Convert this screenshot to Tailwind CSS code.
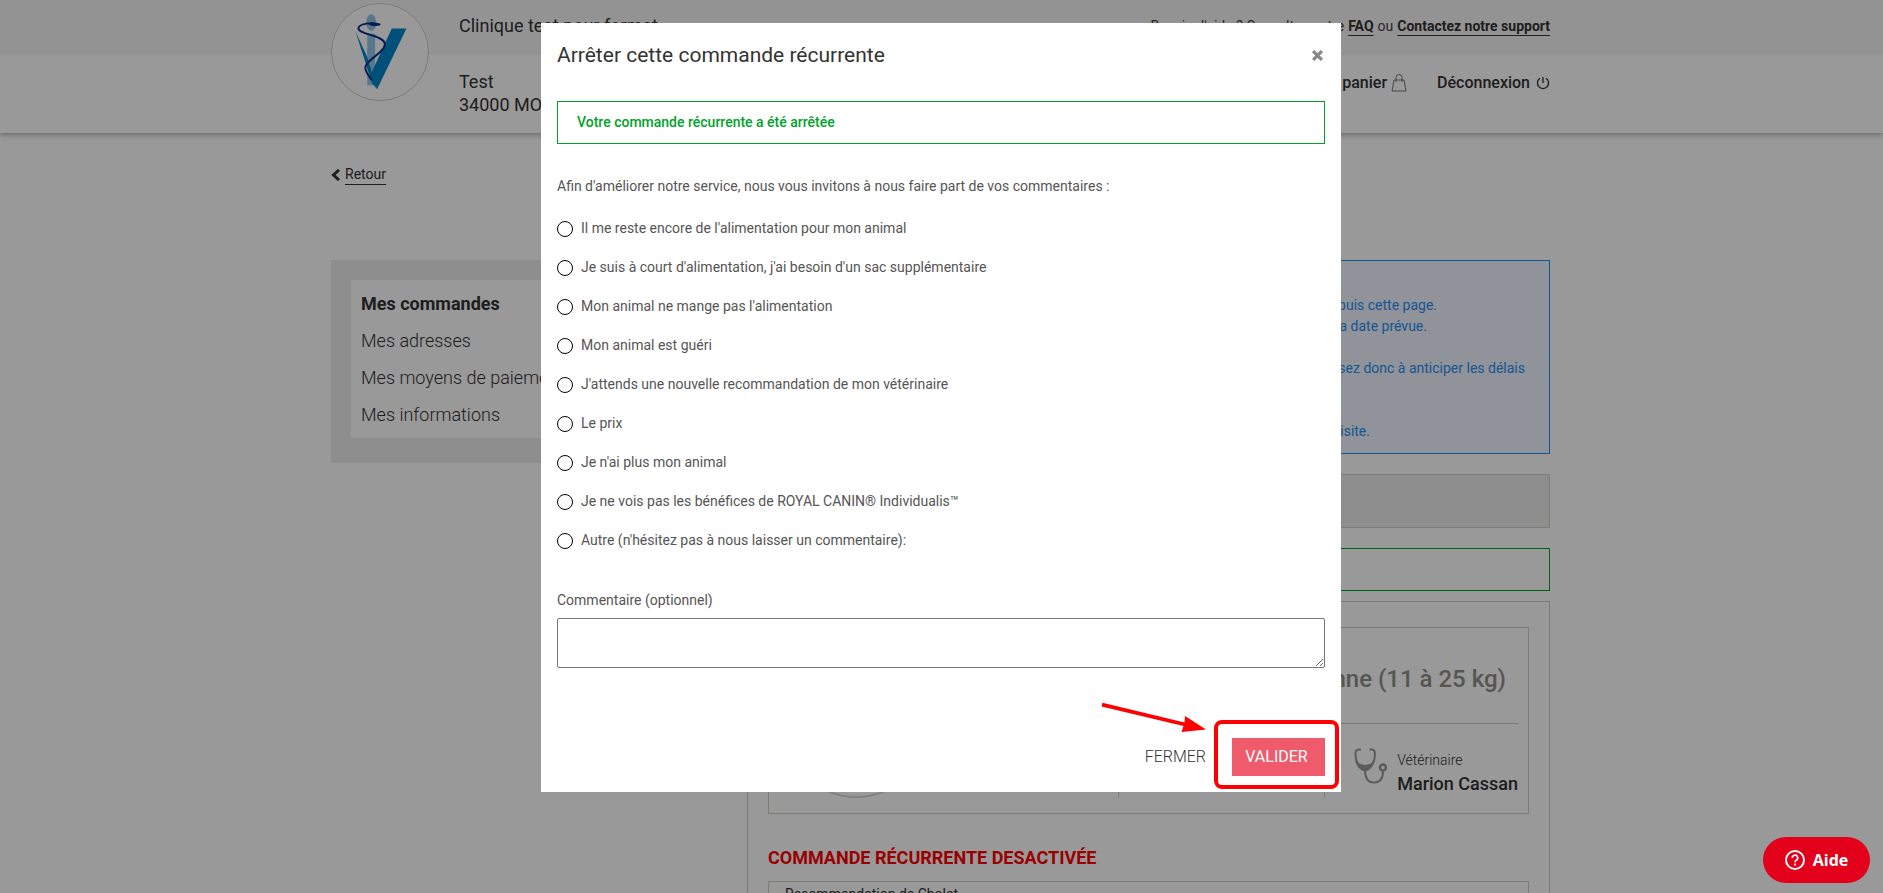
<!DOCTYPE html>
<html lang="fr">
<head>
  <meta charset="UTF-8" />
  <meta name="viewport" content="width=device-width, initial-scale=1.0" />
  <title>Mes commandes</title>
  <script src="https://cdn.jsdelivr.net/npm/@tailwindcss/browser@4"></script>
</head>
<body class="h-screen overflow-hidden bg-white font-['Roboto',sans-serif] text-sm font-light text-[#333]">

<!-- Header -->
<header class="relative bg-linear-to-b from-[#f6f6f6] from-[55px] to-white to-[55px] shadow-[0_2px_5px_rgba(0,0,0,0.3)]">
  <div class="mx-auto flex max-w-[1221px] pr-0.5">
    <a href="#" class="mt-[3px] size-[98px] shrink-0 overflow-hidden rounded-full border border-[#d0d0c4] bg-white" aria-label="Accueil">
      <svg viewBox="0 0 98 98" class="size-full">
        <ellipse cx="40" cy="19" rx="5" ry="8.500" fill="#8fc7ea" />
        <path d="M36 30h8v53h-8z" fill="#8fc7ea" />
        <path d="M61 25h15L46 87 40 71z" fill="#0086cb" />
        <path d="M24 28l12 26 10 33-5-6z" fill="#0086cb" />
        <path d="M49 21c-8-3-22-1-22 4 0 6 27 7 27 16 0 9-20 16-20 24 0 4 3 8 7 13" fill="none" stroke="#0b2e8a" stroke-width="2" />
        <path d="M36 20c5-2 10-1 14 1-4 2-9 3-14-1z" fill="#0b2e8a" />
      </svg>
    </a>
    <div class="ml-[30px] flex-1 text-lg font-normal">
      <p class="flex h-[55px] items-center pb-1">Clinique test pour format</p>
      <p class="pt-[15px] leading-[23px]">Test<br>34000 MONTPELLIER</p>
    </div>
    <div class="h-[133px] text-right">
      <p class="flex h-[55px] items-center justify-end gap-1 pb-1 font-normal text-[#444]">
        Besoin d'aide ? Consultez notre
        <a href="#" class="font-bold text-[#333] underline underline-offset-4">FAQ</a> ou
        <a href="#" class="font-bold text-[#333] underline underline-offset-4">Contactez notre support</a>
      </p>
      <nav class="flex justify-end gap-[30px] pt-4 text-base font-medium">
        <a href="#" class="flex items-center gap-1">Mon panier
          <svg viewBox="0 0 16 18" class="h-[18px] w-4" fill="none" stroke="#777"><path d="M3 6h10l2 11H1zM5 8V3.500a3 3 0 0 1 6 0V8" /></svg>
        </a>
        <a href="#" class="flex items-center gap-1.5">Déconnexion
          <svg viewBox="0 0 14 14" class="size-3.5" fill="none" stroke="#333" stroke-width="1.300"><path d="M7 1v6M4 2.200a5.600 5.600 0 1 0 6 0" /></svg>
        </a>
      </nav>
    </div>
  </div>
</header>

<main class="mx-auto max-w-[1221px] pr-0.5">
  <a href="#" class="mt-[31px] inline-flex items-center gap-[5px] font-normal leading-5">
    <svg viewBox="0 0 9 12" class="h-3 w-[9px]" fill="none" stroke="#333" stroke-width="3"><path d="M8 1L2.500 6 8 11" /></svg>
    <span class="border-b border-[#333]">Retour</span>
  </a>

  <div class="mt-[74px] grid grid-cols-[386px_1fr] items-start gap-[30px]">
    <aside class="bg-[#ededed] p-5 pb-[25px]">
      <ul class="bg-white px-2.5 py-[5px] text-lg leading-[37px]">
        <li><a href="#" class="font-bold">Mes commandes</a></li>
        <li><a href="#">Mes adresses</a></li>
        <li><a href="#">Mes moyens de paiement</a></li>
        <li><a href="#">Mes informations</a></li>
      </ul>
    </aside>

    <section>
      <div class="h-[194px] border border-[#1e90ff] bg-[#f0f5ff] px-5 py-[13px] text-right font-normal leading-[21px] text-[#2b90f5]">
        <p class="pt-[21px] pr-[92px]">Vous pouvez gérer votre commande récurrente depuis cette page.</p>
        <p class="pr-[102px]">Votre commande sera préparée à la date prévue.</p>
        <p class="pt-[21px] pr-1">Pensez donc à anticiper les délais</p>
        <p class="pt-[42px] pr-[159px]">Votre vétérinaire vous attend pour une visite.</p>
      </div>
      <div class="mt-5 h-[54px] border border-[#d0d0c4] bg-[#ededed]"></div>
      <div class="mt-5 h-[43px] border border-[#00a32a]"></div>

      <article class="mt-2.5 border border-[#d0d0c4] px-5 pt-[25px]">
        <div class="h-[187px] border border-[#d0d0c4] px-2.5">
          <div class="flex h-24 items-center justify-end border-b border-[#d0d0c4] pt-2 pr-3">
            <h2 class="text-2xl font-medium text-[#918f88]">Chienne moyenne (11 à 25 kg)</h2>
          </div>
          <div class="flex h-[74px]">
            <div class="flex-1 pl-2"><div class="-mt-[65px] size-[139px] rounded-full border-2 border-[#dadada]"></div></div>
            <div class="w-[207px] border-x border-[#d0d0c4]"></div>
            <div class="flex w-[193px] items-start justify-end gap-2.5 pt-6">
              <svg viewBox="0 0 33 36" class="h-9 w-[33px]" fill="none" stroke="#9a9a9a" stroke-width="2">
                <path d="M7 1.500H5Q1.500 1.500 1.500 6C1.500 14 5 21 11 21s10-7 10-15q0-4.500-3.500-4.500h-2" />
                <path d="M3 15q8 6 16 0-3 7-8 7t-8-7z" fill="#9a9a9a" />
                <path d="M11 22c0 8 3 12.500 9 12.500S29 30 29 23" />
                <circle cx="29" cy="19.500" r="3" stroke-width="2.500" />
              </svg>
              <p class="leading-6">Vétérinaire<br><span class="text-lg font-medium leading-6">Marion Cassan</span></p>
            </div>
          </div>
        </div>
        <h3 class="mt-[30px] text-lg font-bold leading-7 text-[#ff0000]">COMMANDE RÉCURRENTE DESACTIVÉE</h3>
        <div class="mt-[9px] h-40 border border-[#d0d0c4] px-4 leading-6 font-normal">Recommandation de Cholet</div>
      </article>
    </section>
  </div>
</main>

<!-- Modal -->
<div class="fixed inset-0 flex items-start justify-center bg-black/40 pt-[23px] pr-px">
  <form class="relative w-[800px] bg-white px-4 pb-4" role="dialog" aria-labelledby="modal-title">
    <div class="flex items-center justify-between pt-[18px]">
      <h1 id="modal-title" class="text-[21px] font-normal leading-7">Arrêter cette commande récurrente</h1>
      <button type="button" aria-label="Fermer la fenêtre" class="mr-0.5">
        <svg viewBox="0 0 10 10" class="size-[11px]" stroke="#888" stroke-width="3"><path d="M1 1l8 8M9 1L1 9" /></svg>
      </button>
    </div>
    <p class="mt-8 border border-[#00a32a] px-[19px] py-2.5 font-medium leading-[21px] text-[#00a32a]">Votre commande récurrente a été arrêtée</p>
    <p class="mt-8 font-normal leading-[21px] text-[#555]">Afin d'améliorer notre service, nous vous invitons à nous faire part de vos commentaires :</p>

    <fieldset class="mt-[21px] flex flex-col gap-[18px] font-normal leading-[21px] text-[#555]">
      <label class="flex items-center gap-2"><input type="radio" name="reason" class="size-4 appearance-none rounded-full border border-black checked:border-4" />Il me reste encore de l'alimentation pour mon animal</label>
      <label class="flex items-center gap-2"><input type="radio" name="reason" class="size-4 appearance-none rounded-full border border-black checked:border-4" />Je suis à court d'alimentation, j'ai besoin d'un sac supplémentaire</label>
      <label class="flex items-center gap-2"><input type="radio" name="reason" class="size-4 appearance-none rounded-full border border-black checked:border-4" />Mon animal ne mange pas l'alimentation</label>
      <label class="flex items-center gap-2"><input type="radio" name="reason" class="size-4 appearance-none rounded-full border border-black checked:border-4" />Mon animal est guéri</label>
      <label class="flex items-center gap-2"><input type="radio" name="reason" class="size-4 appearance-none rounded-full border border-black checked:border-4" />J'attends une nouvelle recommandation de mon vétérinaire</label>
      <label class="flex items-center gap-2"><input type="radio" name="reason" class="size-4 appearance-none rounded-full border border-black checked:border-4" />Le prix</label>
      <label class="flex items-center gap-2"><input type="radio" name="reason" class="size-4 appearance-none rounded-full border border-black checked:border-4" />Je n'ai plus mon animal</label>
      <label class="flex items-center gap-2"><input type="radio" name="reason" class="size-4 appearance-none rounded-full border border-black checked:border-4" />Je ne vois pas les bénéfices de ROYAL CANIN® Individualis™</label>
      <label class="flex items-center gap-2"><input type="radio" name="reason" class="size-4 appearance-none rounded-full border border-black checked:border-4" />Autre (n'hésitez pas à nous laisser un commentaire):</label>
    </fieldset>

    <label for="comment" class="mt-[39px] block font-normal leading-[21px] text-[#555]">Commentaire (optionnel)</label>
    <textarea id="comment" class="mt-[7px] block h-[50px] w-full rounded-xs border border-[#767676] p-1"></textarea>

    <div class="mt-[70px] flex items-center justify-end gap-[26px] text-base">
      <button type="button">FERMER</button>
      <button type="submit" class="h-[38px] w-[93px] bg-[#ef5b6b] pr-1 font-normal text-white">VALIDER</button>
    </div>

    <!-- Highlight around the submit button -->
    <div class="pointer-events-none absolute right-0.5 bottom-[3px] h-[69px] w-[125px] rounded-lg border-4 border-[#ff0000]"></div>
    <svg viewBox="0 0 106 32" class="pointer-events-none absolute right-[134px] bottom-[58px] h-8 w-[106px]" fill="#ff0000">
      <path d="M1.500.800L83.500 20.500l.500-6.500 21 13.500L80.500 30l2-6L.500 4.500z" />
    </svg>
  </form>
</div>

<button type="button" class="fixed right-[13px] bottom-2.5 flex h-[46px] w-[107px] items-center justify-center gap-2 rounded-full bg-[#e2001a] font-['Open_Sans',sans-serif] text-base font-bold text-white">
  <svg viewBox="0 0 20 20" class="size-5" fill="none" stroke="#fff" stroke-width="2"><circle cx="10" cy="10" r="9" /><path d="M7.300 8a2.700 2.700 0 1 1 4 2.300c-.900.500-1.300.900-1.300 1.900M10 13.600v1.800" stroke-width="1.700" /></svg>
  Aide
</button>
</body>
</html>
